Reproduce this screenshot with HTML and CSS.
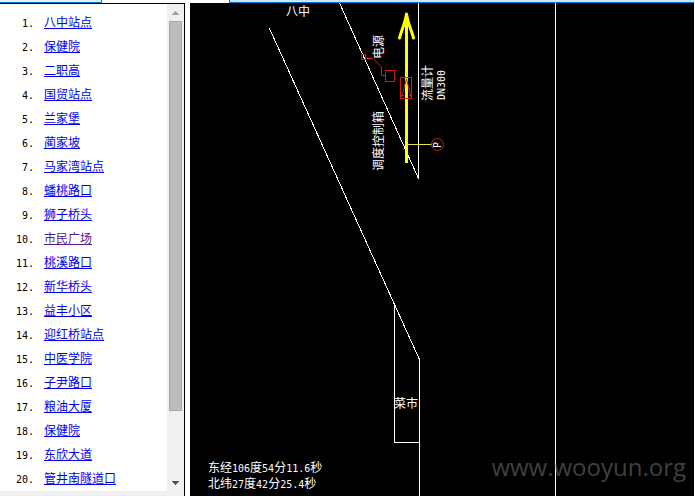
FILE: index.html
```html
<!DOCTYPE html>
<html lang="zh-CN">
<head>
<meta charset="utf-8">
<title>站点</title>
<link rel="stylesheet" href="styles.css">
</head>
<body>
<div class="page">
  <aside class="side">
    <div class="tab-edge"></div>
    <div class="panel">
      <div class="panel-body">
        <ol class="stations">
          <li><span class="num">1.</span><a href="#s1">八中站点</a></li>
          <li><span class="num">2.</span><a href="#s2">保健院</a></li>
          <li><span class="num">3.</span><a href="#s3">二职高</a></li>
          <li><span class="num">4.</span><a href="#s4">国贸站点</a></li>
          <li><span class="num">5.</span><a href="#s5">兰家堡</a></li>
          <li><span class="num">6.</span><a href="#s6">蔺家坡</a></li>
          <li><span class="num">7.</span><a href="#s7">马家湾站点</a></li>
          <li><span class="num">8.</span><a href="#s8">蟠桃路口</a></li>
          <li><span class="num">9.</span><a href="#s9">狮子桥头</a></li>
          <li><span class="num">10.</span><a class="seen" href="#s10">市民广场</a></li>
          <li><span class="num">11.</span><a href="#s11">桃溪路口</a></li>
          <li><span class="num">12.</span><a href="#s12">新华桥头</a></li>
          <li><span class="num">13.</span><a href="#s13">益丰小区</a></li>
          <li><span class="num">14.</span><a href="#s14">迎红桥站点</a></li>
          <li><span class="num">15.</span><a href="#s15">中医学院</a></li>
          <li><span class="num">16.</span><a href="#s16">子尹路口</a></li>
          <li><span class="num">17.</span><a href="#s17">粮油大厦</a></li>
          <li><span class="num">18.</span><a href="#s18">保健院</a></li>
          <li><span class="num">19.</span><a href="#s19">东欣大道</a></li>
          <li><span class="num">20.</span><a href="#s20">管井南隧道口</a></li>
        </ol>
        <div class="scrollbar">
          <button class="arrow" type="button" aria-label="向上滚动"><svg width="7" height="4" viewBox="0 0 7 4" shape-rendering="crispEdges"><path d="M3 0h1v1h1v1h1v1h1v1H0V3h1V2h1V1h1z" fill="#a0a0a0"/></svg></button>
          <div class="track"><div class="thumb"></div></div>
          <button class="arrow" type="button" aria-label="向下滚动"><svg width="7" height="4" viewBox="0 0 7 4" shape-rendering="crispEdges"><path d="M0 0h7v1H6v1H5v1H4v1H3V3H2V2H1V1H0z" fill="#505050"/></svg></button>
        </div>
      </div>
      <div class="hscroll"></div>
    </div>
  </aside>
  <main class="main">
    <div class="top-edge"></div>
    <div class="canvas">
      <svg class="drawing" width="504" height="493" viewBox="190 3 504 493">
        <g class="wall">
          <path d="M269.500 28.500L394.500 304.500L419.500 359.500V496"/>
          <path d="M339.500 3L418.500 178.500V3"/>
          <path d="M394.500 304.500V442.500H419.500"/>
          <path d="M555.500 3V496"/>
        </g>
        <g class="flow">
          <path class="shaft" d="M406.500 163V14"/>
          <path class="head" d="M399.500 38C402 29 405.500 22 406.500 14C407.500 22 411 29 413.500 38"/>
          <path class="branch" d="M407 144.500H432"/>
        </g>
        <g class="device">
          <rect x="361.500" y="54.500" width="4" height="5"/>
          <path d="M366 58.500H373L381.500 67V75.500H386"/>
          <rect x="385.500" y="70.500" width="9" height="11"/>
          <rect x="400.500" y="77.500" width="11" height="21"/>
          <path d="M401.500 97L406.500 79L411 97M401 95.500H404M409 95.500H411"/>
          <circle cx="437.500" cy="144.500" r="6"/>
        </g>
        <g class="label">
          <text x="286" y="16">八中</text>
          <text x="394" y="408">菜市</text>
          <text transform="translate(383 59) rotate(-90)">电源</text>
          <text transform="translate(383 171) rotate(-90)">调度控制箱</text>
          <text transform="translate(432 101) rotate(-90)">流量计</text>
          <text class="digits" transform="translate(445 100) rotate(-90)">DN300</text>
          <text class="digits" transform="translate(441 148) rotate(-90)">P</text>
          <text x="208" y="472">东经<tspan class="digits">106</tspan>度<tspan class="digits">54</tspan>分<tspan class="digits">11.6</tspan>秒</text>
          <text x="208" y="488">北纬<tspan class="digits">27</tspan>度<tspan class="digits">42</tspan>分<tspan class="digits">25.4</tspan>秒</text>
        </g>
      </svg>
      <div class="watermark">www.wooyun.org</div>
    </div>
  </main>
</div>
</body>
</html>
```
FILE: styles.css
```css
* { box-sizing: border-box; }

body {
  margin: 0;
  background: #fff;
  color: #000;
  font-family: "Noto Sans CJK SC", sans-serif;
  font-size: 12px;
}

.page {
  display: flex;
  gap: 5px;
  height: 100vh;
  overflow: hidden;
}

.side {
  display: flex;
  flex-direction: column;
  flex: 0 0 185px;
}

.tab-edge {
  flex: 0 0 3px;
  width: 102px;
  background: #e5f3fb;
  border-right: 1px solid #0078c8;
  border-bottom: 1px solid #0078c8;
}

.panel {
  display: flex;
  flex-direction: column;
  flex: 1;
  min-height: 0;
  border-top: 1px solid #000;
  border-right: 1px solid #000;
}

.panel-body {
  display: flex;
  flex: 1;
  min-height: 0;
}

.stations {
  flex: 1;
  margin: 0;
  padding: 6px 0 0;
  list-style: none;
  overflow: hidden;
}

.stations li {
  display: flex;
  align-items: baseline;
  gap: 10px;
  height: 24px;
  line-height: 24px;
}

.num {
  width: 34px;
  text-align: right;
  font-family: "DejaVu Sans Mono", monospace;
  font-size: 10px;
}

.stations a {
  color: #00e;
  text-decoration: underline;
  text-decoration-thickness: 1px;
  text-underline-offset: 1px;
  text-decoration-skip-ink: none;
}

.stations a.seen { color: #551a8b; }

.scrollbar {
  display: flex;
  flex-direction: column;
  flex: 0 0 17px;
  background: #f0f0f0;
}

.arrow {
  display: flex;
  align-items: center;
  justify-content: center;
  flex: 0 0 17px;
  padding: 0;
  border: 0;
  background: none;
}

.track {
  flex: 1;
  padding: 0 2px;
}

.thumb {
  height: 86%;
  background: #bcbcbc;
  border: 1px solid #a8a8a8;
}

.hscroll {
  flex: 0 0 5px;
  background: #f0f0f0;
}

.main {
  display: flex;
  flex-direction: column;
  flex: 1;
  min-width: 0;
  padding-right: 1px;
}

.top-edge {
  flex: 0 0 3px;
  margin-left: 39px;
  background: #cce8f8;
  border-left: 1px solid #0078d0;
  border-bottom: 1px solid #0078d0;
}

.canvas {
  position: relative;
  flex: 1;
  min-height: 0;
  background: #000;
  overflow: hidden;
}

.drawing { display: block; }

.drawing path,
.drawing rect,
.drawing circle { fill: none; }

.wall {
  stroke: #fff;
  shape-rendering: crispEdges;
}

.flow { stroke: #ff0; }
.shaft { stroke-width: 3; }

.head {
  stroke-width: 3;
  stroke-linecap: round;
  stroke-linejoin: round;
}

.branch { stroke: #e8e040; }

.device { stroke: #d01818; }

.label { fill: #fff; }

.digits {
  font-family: "DejaVu Sans Mono", monospace;
  font-size: 10px;
}

.watermark {
  position: absolute;
  right: 8px;
  bottom: 13px;
  color: rgba(128, 128, 128, 0.5);
  font-family: "Open Sans", sans-serif;
  font-size: 24px;
  line-height: 32px;
}
```
